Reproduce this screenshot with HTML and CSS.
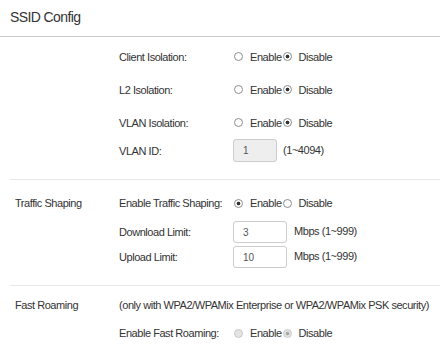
FILE: index.html
```html
<!DOCTYPE html>
<html lang="en">

<head>
    <meta charset="UTF-8">
    <meta name="viewport" content="width=device-width, initial-scale=1.0">
    <title>SSID Config</title>
    <link rel="stylesheet" href="styles.css">
</head>

<body>
    <div class="title-bar">
        <h1>SSID Config</h1>
    </div>

    <div class="group group-isolation">
        <div class="group-name"></div>
        <div class="fields">
            <div class="field tall">
                <span class="field-label">Client Isolation:</span>
                <label class="opt"><input type="radio" name="client"> Enable</label>
                <label class="opt"><input type="radio" name="client" checked> Disable</label>
            </div>
            <div class="field tall">
                <span class="field-label">L2 Isolation:</span>
                <label class="opt"><input type="radio" name="l2"> Enable</label>
                <label class="opt"><input type="radio" name="l2" checked> Disable</label>
            </div>
            <div class="field tall">
                <span class="field-label">VLAN Isolation:</span>
                <label class="opt"><input type="radio" name="vlan"> Enable</label>
                <label class="opt"><input type="radio" name="vlan" checked> Disable</label>
            </div>
            <div class="field vlan-id">
                <span class="field-label">VLAN ID:</span>
                <input class="box small" type="text" value="1" disabled>
                <span class="hint">(1~4094)</span>
            </div>
        </div>
    </div>

    <div class="group group-traffic">
        <div class="group-name">Traffic Shaping</div>
        <div class="fields">
            <div class="field">
                <span class="field-label">Enable Traffic Shaping:</span>
                <label class="opt"><input type="radio" name="shaping" checked> Enable</label>
                <label class="opt"><input type="radio" name="shaping"> Disable</label>
            </div>
            <div class="field limit">
                <span class="field-label">Download Limit:</span>
                <input class="box" type="text" value="3">
                <span class="hint">Mbps (1~999)</span>
            </div>
            <div class="field limit upload">
                <span class="field-label">Upload Limit:</span>
                <input class="box" type="text" value="10">
                <span class="hint">Mbps (1~999)</span>
            </div>
        </div>
    </div>

    <div class="group group-roaming">
        <div class="group-name">Fast Roaming</div>
        <div class="fields">
            <div class="field">
                <span class="note">(only with WPA2/WPAMix Enterprise or WPA2/WPAMix PSK security)</span>
            </div>
            <div class="field roam">
                <span class="field-label">Enable Fast Roaming:</span>
                <label class="opt"><input type="radio" name="roam" disabled> Enable</label>
                <label class="opt"><input type="radio" name="roam" checked disabled> Disable</label>
            </div>
        </div>
    </div>
</body>

</html>
```

FILE: styles.css
```css
body {
    margin: 0;
    font-family: "Liberation Sans", Arial, sans-serif;
    font-size: 11px;
    letter-spacing: -0.45px;
    color: #333;
    background-color: #fff;
}

.title-bar {
    height: 37px;
    box-sizing: border-box;
    padding: 9px 0 0 10px;
    border-bottom: 1px solid #ccc;
}

.title-bar h1 {
    margin: 0;
    font-size: 14px;
    font-weight: normal;
    line-height: 16px;
    letter-spacing: -0.6px;
}

.group {
    display: grid;
    grid-template-columns: 109px 1fr;
    margin-left: 10px;
}

.group-traffic,
.group-roaming {
    border-top: 1px solid #e8e8e8;
}

.group-isolation {
    padding: 3px 0 17px;
}

.group-traffic {
    padding: 12px 0 17px;
}

.group-roaming {
    padding: 8px 0 0;
}

.group-name {
    padding-left: 5px;
    line-height: 22px;
}

.field {
    display: flex;
    align-items: center;
    height: 22px;
}

.field.tall {
    height: 33px;
}

.field.vlan-id {
    height: 23px;
}

.field.limit {
    margin-top: 7px;
}

.field.upload {
    margin-top: 3px;
}

.field.roam {
    margin-top: 6px;
}

.field-label {
    width: 114px;
    flex-shrink: 0;
}

.opt {
    display: flex;
    align-items: center;
}

.opt input {
    appearance: none;
    -webkit-appearance: none;
    width: 9px;
    height: 9px;
    margin: 0 7px 0 1px;
    border: 1px solid #8c8c8c;
    border-radius: 50%;
    background-color: #fff;
    box-sizing: border-box;
}

.opt input:checked {
    background: radial-gradient(circle, #333 0, #333 1.6px, #fff 2.2px);
}

.opt input:disabled {
    border-color: #c8c8c8;
    background-color: #e4e4e4;
}

.opt input:disabled:checked {
    background: radial-gradient(circle, #aaa 0, #aaa 1.6px, #e4e4e4 2.2px);
}

.box {
    box-sizing: border-box;
    width: 54px;
    height: 22px;
    margin: 0 7px 0 0;
    padding: 0 0 0 9px;
    border: 1px solid #ccc;
    border-radius: 3px;
    font-family: "Liberation Sans", Arial, sans-serif;
    font-size: 10px;
    color: #555;
    background-color: #fff;
}

.box.small {
    width: 44px;
    height: 23px;
    margin-right: 6px;
    background-color: #eee;
    color: #555;
}

.hint {
    margin-top: -2px;
}
```
